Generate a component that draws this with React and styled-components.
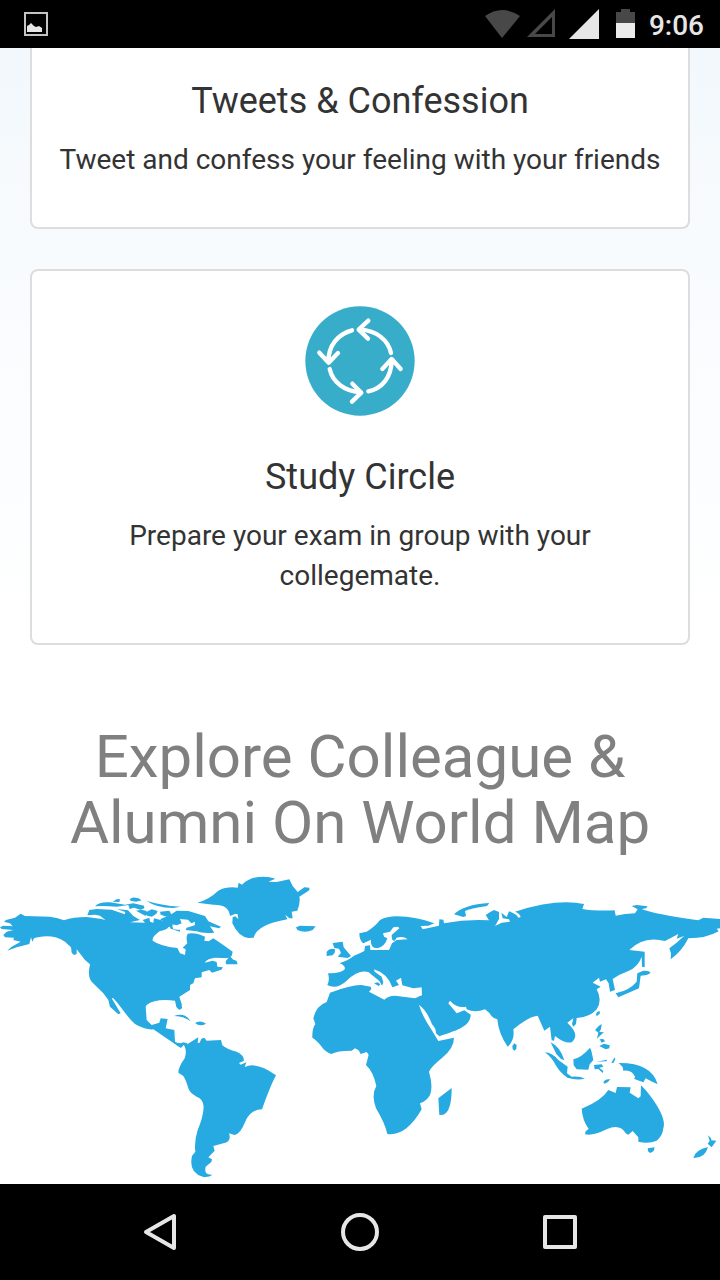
import React from "react";
import styled, { createGlobalStyle } from "styled-components";

const GlobalStyle = createGlobalStyle`
  * { box-sizing: border-box; }
  body {
    margin: 0;
    background: #fff;
    font-family: Roboto, "Liberation Sans", sans-serif;
    color: #333;
  }
`;

const Screen = styled.div`
  display: flex;
  flex-direction: column;
  height: 100vh;
`;

const StatusBar = styled.header`
  display: flex;
  flex: none;
  align-items: center;
  justify-content: space-between;
  height: 48px;
  padding: 0 16px 0 24px;
  background: #000;
`;

const StatusIcons = styled.div`
  display: flex;
  align-items: center;
`;

const Clock = styled.time`
  margin-left: 14px;
  padding-top: 4px;
  color: #e6e6e6;
  font-size: 28px;
  font-weight: 500;
  line-height: 32px;
`;

const Content = styled.main`
  flex: 1;
  min-height: 0;
  overflow: hidden;
  background: linear-gradient(#f2f8fc 0, #f8fbfe 200px, #fff 600px);
`;

const CardList = styled.div`
  display: flex;
  flex-direction: column;
  gap: 40px;
  padding: 0 30px;
`;

const Card = styled.article`
  display: flex;
  flex-direction: column;
  align-items: center;
  padding: ${(p) => (p.$continued ? "33px" : "35px")} 24px 47px;
  border: 2px solid #ddd;
  border-radius: 8px;
  background: #fff;
  text-align: center;
  ${(p) => p.$continued && "border-top: 0; border-top-left-radius: 0; border-top-right-radius: 0;"}
`;

const CardIcon = styled.svg`
  width: 110px;
  height: 110px;
  margin-bottom: 41px;
`;

const CardTitle = styled.h3`
  margin: 0 0 19px;
  font-size: 36px;
  font-weight: 400;
  line-height: 40px;
`;

const CardText = styled.p`
  margin: 0;
  font-size: 28px;
  line-height: 40px;
`;

const MapTitle = styled.h2`
  margin: 79px 30px 14px;
  color: #808080;
  font-size: 60px;
  font-weight: 400;
  line-height: 66px;
  text-align: center;
`;

const Map = styled.svg`
  display: block;
  width: 100%;
  fill: #27a9e1;
`;

const NavBar = styled.nav`
  display: flex;
  flex: none;
  align-items: center;
  justify-content: center;
  gap: 104px;
  height: 96px;
  background: #000;
`;

const NavButton = styled.button`
  width: 96px;
  height: 96px;
  padding: 0;
  border: 0;
  background: none;

  svg {
    display: block;
    margin: auto;
    fill: none;
    stroke: #e6e6e6;
    stroke-width: 4;
    stroke-linejoin: round;
  }
`;

const StudyCircleIcon = () => (
  <CardIcon viewBox="45 48 330 330" aria-hidden="true">
    <circle cx="210" cy="213" r="164" fill="#37adca" />
    <g fill="none" stroke="#fff" strokeWidth="13" strokeLinecap="round" strokeLinejoin="round">
      <path d="M186 121C145 132 115 165 115 216M88 188l28 30 28-29" />
      <path d="M119 237c9 39 44 68 94 70M187 281l27 27-28 27" />
      <path d="M235 304c40-8 69-41 70-92M277 237l28-30 27 30" />
      <path d="M303 189c-8-38-43-68-93-70M235 92l-29 27 28 27" />
    </g>
  </CardIcon>
);

const WorldMap = () => (
  <Map viewBox="0 0 2160 942" role="img" aria-label="World map">
    {/* North America */}
    <path d="M62 131L75 138L150 140Q175 143 192 151Q220 141 260 141L305 147L317 151L300 137L285 134L262 136L268 120L290 117L335 119L374 133L376 126L350 117L384 121L400 138L420 150L390 157L435 158L428 150L448 143L450 155L460 158L462 145L490 152L512 159L520 166L505 172Q500 180 480 183Q455 200 458 212Q480 228 532 234L540 250L555 255L557 238L548 233L562 220Q557 203 563 191Q585 186 615 200L613 212L626 214L640 205Q670 225 698 245L695 258L683 264L668 264L645 263Q620 266 614 278L638 272L650 276L652 290L669 292L664 299L636 308L628 300L605 307L605 322L585 325L580 340L570 345L570 360L538 380L545 402L546 415L538 420L529 411L525 392Q465 385 440 405L437 410L440 450L455 465L478 458L482 445L503 447L497 475L523 480L525 515L538 522L550 517L562 520L560 530L550 524L542 533L528 524L460 478Q435 480 405 462C380 440 360 405 340 385L335 385L362 430L355 433L330 410L325 390L310 370L275 335Q262 320 270 283L255 270L230 238L230 252L222 255L215 248L213 232L195 215Q170 199 140 199Q115 200 102 205L97 215L93 202L88 222L50 232L22 242L35 230L62 215L40 210L42 203L15 202L10 195L20 185L40 180L5 177L0 172L10 167L38 169L30 160L12 155L18 150L45 143ZM690 258L698 268L710 273L713 283L678 283L677 274Z" />
    {/* Canadian Arctic islands */}
    <path d="M285 109Q297 95 330 97L375 104L400 100L432 107L433 115L421 119L402 113L389 117L385 105L350 110Q310 106 285 109ZM338 95L350 88L360 87L358 96ZM389 88L397 83Q415 81 425 91L408 95L392 92ZM408 122L425 119L440 123L437 138ZM440 92Q480 106 542 110L520 114Q465 112 440 92ZM435 128L455 118L473 123L469 131L456 140L441 137ZM480 125L508 122L515 135L500 140L482 134Z" />
    <path transform="translate(480)" d="M30 135L50 122L85 123L135 138L145 154L183 170L177 175L150 169L163 188Q130 192 110 184L77 180L80 173L104 166L105 155L94 160L84 149L60 147L65 160L50 166L35 163L40 178L60 180L60 185L32 176L26 163L8 181L-5 182L5 160L22 160L0 148Z" />
    {/* Greenland, Iceland and the Caribbean */}
    <path transform="translate(480)" d="M112 98Q145 90 175 62Q200 49 233 53L236 38L246 44Q270 20 310 20Q330 20 346 26L325 35L350 36L388 28L398 48L413 66L433 52L448 53L448 61L418 80Q422 98 412 122L395 125L398 145L388 145L376 134L382 148Q290 164 281 203L265 204Q235 200 217 160L218 142L226 139L235 148L233 133L226 131L210 138Q207 103 160 104ZM408 172L420 167L467 169L458 180Q435 190 412 180ZM42 438Q75 425 92 454Q70 438 42 438ZM105 459Q120 449 138 461Q120 471 105 459Z" />
    {/* South America */}
    <path transform="translate(420 450)" d="M115 68L138 75L175 52L173 69L179 68L184 56L193 53L200 62L243 60L247 76Q262 89 290 95Q312 105 312 122L297 129L302 134L319 127L314 141Q350 124 408 166Q392 195 366 268Q335 268 318 300Q300 345 283 345L267 340Q276 365 250 370L220 378L224 392L205 412L216 418L214 426L197 440Q190 467 218 464Q205 473 188 470Q145 458 156 408L166 395Q162 365 173 330Q190 290 191 260Q190 237 170 230Q150 220 145 205Q138 180 130 168L115 158Q115 142 134 115Q142 95 132 74L123 83L108 74Z" />
    {/* Africa */}
    <path transform="translate(900 330)" d="M90 38Q155 14 184 15L212 20L214 27L207 35L253 59Q265 47 285 47L345 55L375 42L378 68L357 75Q365 105 395 150L415 183L462 173Q462 205 425 235Q395 259 387 275Q400 320 390 345Q380 363 360 370L365 388Q318 470 262 462Q255 430 228 385Q213 345 229 318Q220 275 198 255L206 224L200 216L182 222L176 211L165 205L155 212Q110 212 94 222Q75 215 65 200Q50 180 37 173Q36 145 46 132L40 115Q48 77 80 66ZM415 355L455 324Q455 395 430 404L418 405Z" />
    {/* Europe and Asia */}
    <path transform="translate(900)" d="M178 190L200 185Q225 170 240 150Q260 139 290 139Q350 140 403 160L385 167L362 168L368 178L417 167L418 148L430 149L432 160Q500 147 567 151L557 135L572 125L582 120L597 126L597 147L585 168L605 158L630 155L627 148L608 145L604 128L620 141L627 124Q650 132 655 143L662 141Q660 130 645 125Q770 85 852 102L847 117Q880 123 944 121L947 137Q975 131 1005 130L1013 118L995 108L1010 105L1043 109L1038 115L1025 117Q1060 132 1195 151L1210 143L1260 147L1260 175L1250 176L1256 184Q1220 205 1165 205Q1145 245 1112 268L1113 250L1108 235L1128 220L1152 198L1130 206L1135 192L1095 213Q1030 196 988 240L1034 245L1034 292L1026 290L1025 260Q1015 290 985 303Q960 312 938 327L945 360L930 365L926 340L918 328L900 335L897 323L878 338L902 350L890 358Q908 390 890 418Q870 442 830 444L828 462L820 470L816 462L820 445L802 458Q842 495 815 517Q795 522 765 498L762 512L755 511L750 470L733 482L713 437Q685 440 640 478Q645 510 623 530Q595 490 592 448Q580 448 568 429L555 418Q525 430 500 418L498 410Q470 415 450 392L445 400L470 430L493 421L512 434C512 475 450 486 418 499L408 490Q408 475 396 463Q380 420 357 405L355 380L366 378L365 352L340 355L307 346L303 323L288 332L297 345L277 352Q262 310 222 298L224 305L245 320L250 337L246 347L238 333L205 306Q175 298 140 332Q110 360 82 345Q90 330 84 310Q130 310 135 295Q133 284 118 280Q145 271 162 257Q180 250 193 243L195 228L210 226L211 240L267 240L276 220L290 210L323 208Q310 197 290 203L284 212Q275 215 275 195L298 175L294 170L280 172L270 185L249 190L252 200L262 205Q255 230 232 235Q210 235 213 209L190 220Q178 212 178 190ZM98 219L128 215L131 232L153 258L143 264L113 260L123 249L117 236L103 234ZM80 245Q90 232 105 238Q107 249 98 256L80 258ZM222 340L233 337L241 343L236 348Z" />
    <path transform="translate(1320)" d="M42 133Q70 104 148 99L141 108Q90 115 75 123L78 138L70 141ZM527 370Q570 360 590 335L592 310L610 302Q628 301 632 309L620 315L602 317L597 355L535 382Z" />
    {/* South-east Asian islands, Australia and New Zealand */}
    <path transform="translate(1440 390)" d="M97 138L103 130L110 135L109 147L103 152L98 147ZM348 42L352 35L360 34L359 41L350 49ZM345 90L357 77L365 72L363 87L358 96L372 97L363 104L351 116L355 98ZM359 118L370 117L375 124L365 128ZM358 138L372 131L389 136L388 145L377 148ZM212 127Q240 140 253 181L243 177L229 162ZM195 157Q215 157 235 180L263 200L261 220L275 230Q300 228 315 236Q290 242 262 233Q240 218 227 195Q215 172 195 157ZM280 178Q305 172 330 143L334 152L340 180L329 193L325 209L290 208L281 196ZM342 195L365 193L370 200L358 203L370 213L368 219L355 207L344 208ZM349 185L382 179L379 184ZM394 188L404 172L406 178L400 189ZM370 247Q375 236 391 238Q385 248 374 251ZM416 189Q515 188 533 253Q510 243 497 235L490 247L463 237L465 230Q455 208 430 212L428 201ZM305 326Q365 302 385 270L407 279L411 261L452 262L449 278L475 295L482 289L483 256Q500 272 515 293Q560 355 550 385Q548 408 530 422Q505 433 475 425L475 412L458 393L445 404L437 400Q420 370 380 388Q340 408 315 403L317 394L326 387Q307 360 305 326ZM503 445L524 442L521 453L511 459L505 455ZM640 474Q645 450 684 441Q675 475 640 474ZM684 406L693 415L694 421L709 422L695 442L683 431L689 423Z" />
  </Map>
);

export default function App() {
  return (
    <>
      <GlobalStyle />
      <Screen>
        <StatusBar>
          <svg width="24" height="24" viewBox="0 0 24 24" aria-hidden="true">
            <path d="M1 1h22v22H1z" fill="none" stroke="#c4c4c4" strokeWidth="2" />
            <path d="M3 20v-6l2-1 2-2 3 3 2 1 3-1 3 2v4z" fill="#e6e6e6" />
          </svg>
          <StatusIcons>
            <svg width="131" height="32" viewBox="0 0 131 32" aria-hidden="true">
              <path d="M0 8Q17-4 35 8L17 30Z" fill="#484848" />
              <path d="M70 1v28H42zM67 9v17H50z" fill="#484848" fillRule="evenodd" />
              <path d="M114 1v30H84z" fill="#e6e6e6" />
            </svg>
            <svg width="19" height="30" viewBox="0 0 19 30" aria-hidden="true">
              <path d="M0 3h5V0h9v3h5v11H0z" fill="#484848" />
              <path d="M0 14h19v15H0z" fill="#ebebeb" />
            </svg>
            <Clock>9:06</Clock>
          </StatusIcons>
        </StatusBar>
        <Content>
          <CardList>
            <Card $continued>
              <CardTitle>Tweets &amp; Confession</CardTitle>
              <CardText>Tweet and confess your feeling with your friends</CardText>
            </Card>
            <Card>
              <StudyCircleIcon />
              <CardTitle>Study Circle</CardTitle>
              <CardText>Prepare your exam in group with your collegemate.</CardText>
            </Card>
          </CardList>
          <MapTitle>Explore Colleague &amp; Alumni On World Map</MapTitle>
          <WorldMap />
        </Content>
        <NavBar>
          <NavButton aria-label="Back">
            <svg width="36" height="40" viewBox="0 0 36 40">
              <path d="M32 4v32L4 20z" />
            </svg>
          </NavButton>
          <NavButton aria-label="Home">
            <svg width="40" height="40" viewBox="0 0 40 40">
              <circle cx="20" cy="20" r="17" />
            </svg>
          </NavButton>
          <NavButton aria-label="Recent apps">
            <svg width="36" height="36" viewBox="0 0 36 36">
              <path d="M3 3h30v30H3z" />
            </svg>
          </NavButton>
        </NavBar>
      </Screen>
    </>
  );
}
